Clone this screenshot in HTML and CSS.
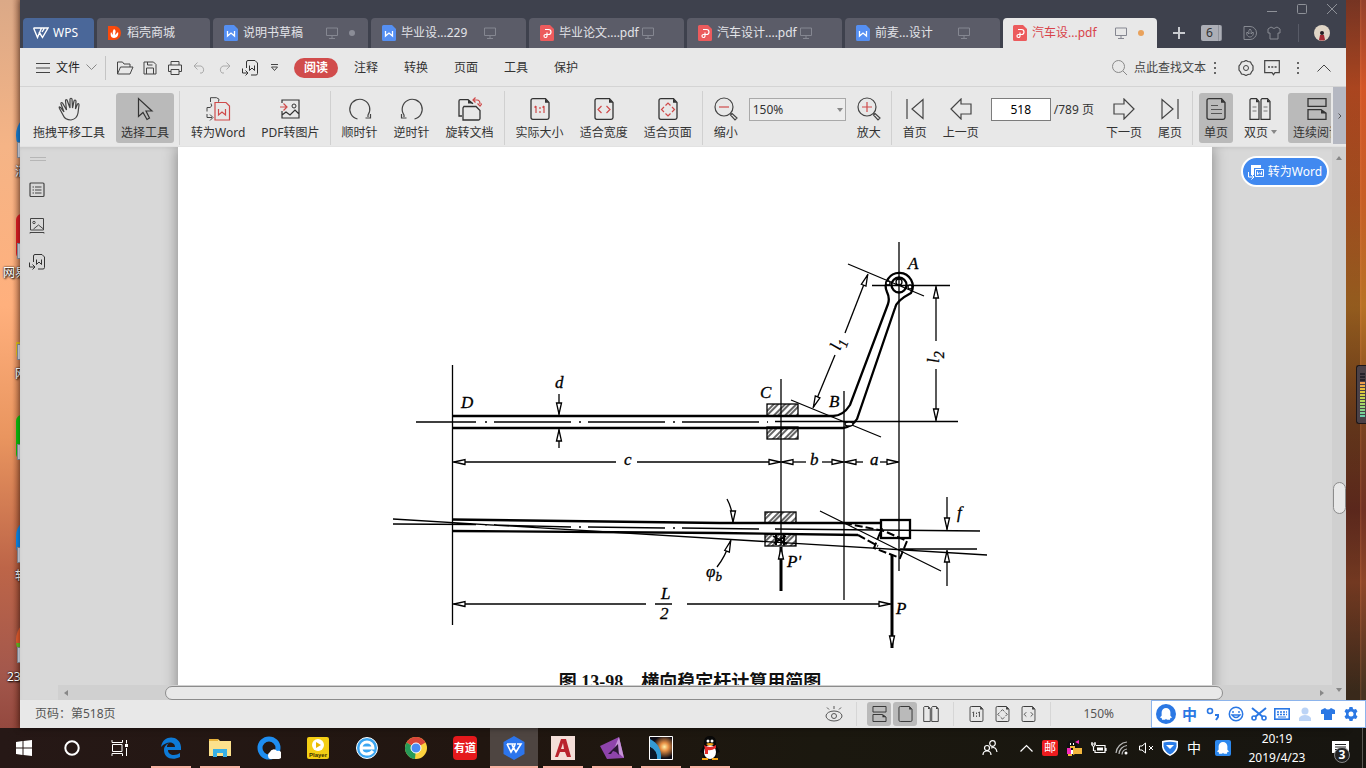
FILE: index.html
```
<!DOCTYPE html>
<html lang="zh-CN">
<head>
    <meta charset="UTF-8">
    <meta name="viewport" content="width=device-width, initial-scale=1.0">
    <title>汽车设计.pdf - WPS</title>
    <link rel="stylesheet" href="styles.css">
</head>
<body>
    <!-- shared icon shapes -->
    <svg class="sprite" width="0" height="0">
        <symbol id="doc-w" viewBox="0 0 14 16"><path d="M1.500 0H10l4 4v10.500a1.500 1.500 0 0 1-1.500 1.500h-11A1.500 1.500 0 0 1 0 14.500v-13A1.500 1.500 0 0 1 1.500 0z" fill="#558ff2"/><path d="M3.500 6v5L7 8l3.500 3V6" fill="none" stroke="#fff" stroke-width="1.300"/></symbol>
        <symbol id="doc-p" viewBox="0 0 14 16"><path d="M1.500 0H10l4 4v10.500a1.500 1.500 0 0 1-1.500 1.500h-11A1.500 1.500 0 0 1 0 14.500v-13A1.500 1.500 0 0 1 1.500 0z" fill="#ec5b5d"/><path d="M5 4.500h3.500a2.500 2.500 0 0 1 0 5H5.500a1.500 1.500 0 1 0 1.500 1.500V7.500" fill="none" stroke="#fff" stroke-width="1.200"/></symbol>
        <symbol id="monitor" viewBox="0 0 12 12"><path d="M.5 1h11v7.500H.5zM6 8.500v3M3 11.500h6" fill="none" stroke="currentColor"/></symbol>
        <symbol id="to-word" viewBox="0 0 16 16"><path d="M4.500 8V2q0-1.500 1.500-1.500h7L15.500 3v10.500q0 1.500-1.500 1.500H9M.5 8.500v4.500h5M3.500 10.500L6 13l-2.500 2.500M7.500 5.500v5l2.500-2.500 2.500 2.500v-5" fill="none" stroke="currentColor"/></symbol>
        <symbol id="page" viewBox="0 0 20 22"><path d="M3 .7h12.500L19 4.500V19.500q0 1.800-1.800 1.800H2.800Q1 21.300 1 19.500V2.500Q1 .7 3 .7z" fill="none" stroke="#333" stroke-width="1.300"/><path d="M15 .7v4h4z" fill="#333"/></symbol>
        <symbol id="continuous" viewBox="0 0 20 22"><path d="M1 .7h18v7.600H1zM1 21.300v-9.600h13l5 3.500v6.100z" fill="none" stroke="#333" stroke-width="1.300"/><path d="M14 11.500v4h5z" fill="#333"/></symbol>
        <symbol id="two-pages" viewBox="0 0 22 22"><path d="M2 .7h5.500L10 3.500v17.800H1V1.700zM13 .7h5.500L21 3.500v17.800h-9V1.700z" fill="none" stroke="#333" stroke-width="1.200"/><path d="M7 .7v3.500h3zM18 .7v3.500h3z" fill="#333"/></symbol>
        <symbol id="zoom-lens" viewBox="0 0 24 24"><circle cx="10" cy="10" r="9" fill="none" stroke="#444" stroke-width="1.200"/><path d="M16.500 16.500l1.500 1M18 16.500l5 4.500-2 2-4.500-5z" fill="none" stroke="#444" stroke-width="1.200"/></symbol>
        <symbol id="ghost" viewBox="0 0 16 16"><path d="M8 1a5 5 0 0 1 5 5v4l2 2-2 .5-.5 2H9l-1-1-1 1H3.500l-.5-2-2-.5 2-2V6a5 5 0 0 1 5-5z" fill="#fff"/></symbol>
    </svg>

    <main class="desktop">
        <div class="wallpaper-left">
            <i class="shortcut blue"></i>
            <span class="shortcut-name n1">消</span>
            <i class="shortcut red"></i>
            <span class="shortcut-name n2">网易</span>
            <i class="shortcut yellow"></i>
            <span class="shortcut-name n3">网</span>
            <i class="shortcut green"></i>
            <i class="shortcut sky"></i>
            <span class="shortcut-name n4">软</span>
            <i class="shortcut multi"></i>
            <span class="shortcut-name n5">23</span>
        </div>

        <div class="window">
            <header class="tab-strip">
                <nav class="tabs">
                    <a href="#" class="tab home"><svg width="16" height="12" viewBox="0 0 16 12"><path d="M.5 1h11L9 5M.5 1l4 9.500L8.500 1M6 5l3.500 5.500L15 1h-3" fill="none" stroke="#fff" stroke-width="1.400"/></svg>WPS</a>
                    <a href="#" class="tab store"><svg width="13" height="14" viewBox="0 0 13 14"><path d="M0 0h6.500a6.500 7 0 0 1 0 14H0z" fill="#fa4a0c"/><path d="M6 3c3 2 1 4 1 6l3-3c1 3-1 6-4 6S2 9 3 6l2 3c0-2-1-3 1-6z" fill="#fff"/></svg>稻壳商城</a>
                    <a href="#" class="tab"><svg width="14" height="16"><use href="#doc-w"/></svg><span class="tab-name">说明书草稿</span><svg width="12" height="12"><use href="#monitor"/></svg><i class="dot"></i></a>
                    <a href="#" class="tab"><svg width="14" height="16"><use href="#doc-w"/></svg><span class="tab-name">毕业设...229</span><svg width="12" height="12"><use href="#monitor"/></svg></a>
                    <a href="#" class="tab"><svg width="14" height="16"><use href="#doc-p"/></svg><span class="tab-name">毕业论文....pdf</span><svg width="12" height="12"><use href="#monitor"/></svg></a>
                    <a href="#" class="tab"><svg width="14" height="16"><use href="#doc-p"/></svg><span class="tab-name">汽车设计....pdf</span><svg width="12" height="12"><use href="#monitor"/></svg></a>
                    <a href="#" class="tab"><svg width="14" height="16"><use href="#doc-w"/></svg><span class="tab-name">前麦...设计</span><svg width="12" height="12"><use href="#monitor"/></svg></a>
                    <a href="#" class="tab active"><svg width="14" height="16"><use href="#doc-p"/></svg><span class="tab-name">汽车设...pdf</span><svg width="12" height="12"><use href="#monitor"/></svg><i class="dot"></i></a>
                </nav>
                <button class="new-tab" aria-label="新建"><svg width="12" height="12" viewBox="0 0 12 12"><path d="M6 0v12M0 6h12" stroke="#c9cbd0" stroke-width="2"/></svg></button>
                <button class="tab-count">6</button>
                <div class="strip-right">
                    <div class="window-buttons">
                        <button aria-label="最小化"><svg width="12" height="12" viewBox="0 0 12 12"><path d="M1 8.500h10" stroke="#8e9198"/></svg></button>
                        <button aria-label="最大化"><svg width="12" height="12" viewBox="0 0 12 12"><rect x="1.500" y="1.500" width="9" height="9" rx="1" fill="none" stroke="#8e9198"/></svg></button>
                        <button aria-label="关闭"><svg width="12" height="12" viewBox="0 0 12 12"><path d="M1 1l10 10M11 1L1 11" stroke="#8e9198"/></svg></button>
                    </div>
                    <div class="account">
                        <svg width="14" height="14" viewBox="0 0 14 14"><path d="M1 .5h6a6.500 6.500 0 0 1 0 13H1zM7 3c2 2 1 3 1 5l2-2c1 3-1 5-3 5S3 9 4 6l2 2c0-2-1-3 1-5z" fill="none" stroke="#878a92"/></svg>
                        <svg width="14" height="14" viewBox="0 0 14 14"><path d="M4 1L1 3v4h2v6h8V7h2V3l-3-2q-3 3-6 0z" fill="none" stroke="#878a92"/></svg>
                        <i class="strip-line"></i>
                        <svg class="avatar" width="16" height="16" viewBox="0 0 16 16"><circle cx="8" cy="8" r="8" fill="#e0d5c6"/><circle cx="8" cy="8" r="2" fill="#241c22"/><path d="M5 15l1-5h4l1 5q-3 1-6 0z" fill="#a52b34"/></svg>
                    </div>
                </div>
            </header>

            <div class="menu-bar">
                <button class="file-menu"><svg width="14" height="10" viewBox="0 0 14 10"><path d="M0 .5h14M0 5h14M0 9.500h14" stroke="#444"/></svg>文件<svg class="chevron" width="11" height="7" viewBox="0 0 11 7"><path d="M.5 .5l5 5 5-5" fill="none" stroke="#888"/></svg></button>
                <div class="quick-tools">
                    <button aria-label="打开"><svg width="18" height="14" viewBox="0 0 18 14"><path d="M1.500 13V1h5l1.500 2h6v3M1.500 13L4.500 6h12.500l-3 7z" fill="none" stroke="#444"/></svg></button>
                    <button aria-label="保存"><svg width="14" height="14" viewBox="0 0 14 14"><path d="M1 1h9.500L13 3.500V13H1zM3.500 13V7h7v6M4.500 1v3h5" fill="none" stroke="#444"/></svg></button>
                    <button aria-label="打印"><svg width="14" height="14" viewBox="0 0 14 14"><path d="M3 4V.5h8V4M3 10.500H.5V4h13v6.500H11M3 8.500h8v5H3z" fill="none" stroke="#444"/></svg></button>
                    <button aria-label="撤销"><svg width="13" height="12" viewBox="0 0 13 12"><path d="M1 4h7a4 4 0 0 1 1 7H7M4.500 .5L1 4l3.500 3.500" fill="none" stroke="#aaa"/></svg></button>
                    <button aria-label="重做"><svg width="13" height="12" viewBox="0 0 13 12"><path d="M12 4H5a4 4 0 0 0-1 7h2M8.500 .5L12 4 8.500 7.500" fill="none" stroke="#aaa"/></svg></button>
                    <button aria-label="转为Word"><svg width="16" height="16"><use href="#to-word"/></svg></button>
                    <button aria-label="更多"><svg width="9" height="8" viewBox="0 0 9 8"><path d="M1 .5h7M1.500 3h6l-3 3.500z" fill="none" stroke="#444"/></svg></button>
                </div>
                <nav class="menus">
                    <a href="#" class="current">阅读</a>
                    <a href="#">注释</a>
                    <a href="#">转换</a>
                    <a href="#">页面</a>
                    <a href="#">工具</a>
                    <a href="#">保护</a>
                </nav>
                <label class="search">
                    <svg width="16" height="16" viewBox="0 0 16 16"><circle cx="6.500" cy="6.500" r="6" fill="none" stroke="#888"/><path d="M11 11l4 4" stroke="#888"/></svg>
                    <input type="text" placeholder="点此查找文本">
                </label>
                <button class="dots" aria-label="查找选项"><svg width="3" height="12" viewBox="0 0 3 12"><path d="M0 1h2M0 6h2M0 11h2" stroke="#666" stroke-width="2"/></svg></button>
                <div class="menu-right">
                    <button aria-label="设置"><svg width="16" height="16" viewBox="0 0 16 16"><path d="M6 1.500L8 .5l2 1 2.500.5 1 2 1.500 2v4l-1.500 2-1 2-2.500.5-2 1-2-1-2.500-.5-1-2L1 10V6l1.500-2 1-2z" fill="none" stroke="#444" stroke-width="1.200"/><circle cx="8" cy="8" r="2.500" fill="none" stroke="#444"/></svg></button>
                    <button aria-label="反馈"><svg width="16" height="16" viewBox="0 0 16 16"><path d="M1 .7h14.300v12H11l-1.500 2L8 12.700H.7V.7z" fill="none" stroke="#444" stroke-width="1.200"/><path d="M4 7h2M7.300 7h2M10.600 7h2" stroke="#444" stroke-width="1.500"/></svg></button>
                    <button aria-label="更多选项"><svg width="3" height="12" viewBox="0 0 3 12"><path d="M0 1h2M0 6h2M0 11h2" stroke="#666" stroke-width="2"/></svg></button>
                    <button aria-label="收起功能区"><svg width="14" height="8" viewBox="0 0 14 8"><path d="M.5 7.500L7 1l6.500 6.500" fill="none" stroke="#444"/></svg></button>
                </div>
            </div>

            <div class="ribbon">
                <div class="ribbon-tools">
                    <button class="tool"><svg width="24" height="24" viewBox="0 0 24 24"><path d="M7 15L3.500 10.500Q1.500 9 2.500 11.500L6 18q2 5 8 5 6-1 7-7l1-8q0-2-1.500-1l-2 5 .5-8q-1-2-2 0l-1.500 7-.5-9q-1-1.500-2 0v9L10 3Q8.500 2 8.500 4l1 9-4-7q-2-1-1.500 1l3 8z" fill="none" stroke="#444" stroke-width="1.200"/></svg>拖拽平移工具</button>
                    <button class="tool pressed"><svg width="24" height="24" viewBox="0 0 24 24"><path d="M5.500 1.500v18l4.500-4 4 7 2.500-1.500-3.500-7h6z" fill="none" stroke="#333" stroke-width="1.200"/></svg>选择工具</button>
                    <i class="split"></i>
                    <button class="tool"><svg width="26" height="24" viewBox="0 0 26 24"><path d="M5.500 5V.7h6q4 1 2 4M2 14.500v-4h3q3-1 1-4M2 17v3.500h5M5 17.500l3 3-3 3" fill="none" stroke="#444"/><path d="M10 5.500h11l3.500 3.500v14H10zM13.500 12v6l3.500-3 3.500 3v-6" fill="none" stroke="#cf4a4a" stroke-width="1.200"/></svg>转为Word</button>
                    <button class="tool"><svg width="22" height="22" viewBox="0 0 22 22"><path d="M3 5V2h17v18H3v-7M3 17l4-3 4 3 5-5 4 4" fill="none" stroke="#333" stroke-width="1.200"/><circle cx="15" cy="8" r="2" fill="none" stroke="#333"/><path d="M1 9h6M4.500 5.500L8 9l-3.500 3.500" fill="none" stroke="#cf4a4a" stroke-width="1.200"/></svg>PDF转图片</button>
                    <i class="split"></i>
                    <button class="tool"><svg width="24" height="24" viewBox="0 0 24 24"><path d="M9.500 22A10 10 0 1 1 20 18v2M22.500 17v4h-5" fill="none" stroke="#444" stroke-width="1.200"/></svg>顺时针</button>
                    <button class="tool"><svg width="24" height="24" viewBox="0 0 24 24"><path d="M14.500 22A10 10 0 1 0 4 18v2M1.500 17v4h5" fill="none" stroke="#444" stroke-width="1.200"/></svg>逆时针</button>
                    <button class="tool"><svg width="24" height="24" viewBox="0 0 24 24"><path d="M4 19H1V4q0-1.300 1.300-1.300H10l5 4M6 9.500h12l4 4v8q0 1.500-1.500 1.500H5V11z" fill="none" stroke="#333" stroke-width="1.300"/><path d="M10 2.500l5 4h-5z" fill="#333"/><path d="M17.500 .5L15 3l2.500 2.500M15 3h4q3 0 3 4M19.500 6.500L22 9l2-2.500" fill="none" stroke="#cf4a4a" stroke-width="1.200"/></svg>旋转文档</button>
                    <i class="split"></i>
                    <button class="tool"><svg width="20" height="22"><use href="#page"/><path d="M6 8v7M14 8v7M4.500 9.500L6 8M12.500 9.500L14 8M10 9v2M10 13v2" stroke="#cf4a4a" stroke-width="1.200"/></svg>实际大小</button>
                    <button class="tool"><svg width="20" height="22"><use href="#page"/><path d="M7.500 8L4 11.500 7.500 15M12.500 8l3.500 3.500-3.500 3.500" fill="none" stroke="#cf4a4a" stroke-width="1.200"/></svg>适合宽度</button>
                    <button class="tool"><svg width="20" height="22"><use href="#page"/><path d="M7.500 7.500L10 5l2.500 2.500M7.500 15.500L10 18l2.500-2.500M6 9l-2.500 2.500L6 14M14 9l2.500 2.500L14 14" fill="none" stroke="#cf4a4a" stroke-width="1.200"/></svg>适合页面</button>
                    <i class="split"></i>
                    <button class="tool"><svg width="24" height="24"><use href="#zoom-lens"/><path d="M5 10h10" stroke="#cf4a4a" stroke-width="1.200"/></svg>缩小</button>
                    <div class="zoom-pick"><select aria-label="缩放比例"><option>150%</option></select></div>
                    <button class="tool"><svg width="24" height="24"><use href="#zoom-lens"/><path d="M5 10h10M10 5v10" stroke="#cf4a4a" stroke-width="1.200"/></svg>放大</button>
                    <i class="split"></i>
                    <button class="tool"><svg width="20" height="22" viewBox="0 0 20 22"><path d="M2 1v20M18 1.500v19L7 11z" fill="none" stroke="#444" stroke-width="1.200"/></svg>首页</button>
                    <button class="tool"><svg width="22" height="22" viewBox="0 0 22 22"><path d="M1 11L11 1v5h10v10H11v5z" fill="none" stroke="#444" stroke-width="1.200"/></svg>上一页</button>
                    <div class="page-pick"><input type="text" aria-label="页码" value="518"><span>/789 页</span></div>
                    <button class="tool"><svg width="22" height="22" viewBox="0 0 22 22"><path d="M21 11L11 1v5H1v10h10v5z" fill="none" stroke="#444" stroke-width="1.200"/></svg>下一页</button>
                    <button class="tool"><svg width="20" height="22" viewBox="0 0 20 22"><path d="M18 1v20M2 1.500v19L13 11z" fill="none" stroke="#444" stroke-width="1.200"/></svg>尾页</button>
                    <i class="split"></i>
                    <button class="tool pressed"><svg width="20" height="22"><use href="#page"/><path d="M5 7.500h7M5 11.500h11M5 15.500h11" stroke="#555"/></svg>单页</button>
                    <button class="tool"><svg width="22" height="22"><use href="#two-pages"/><path d="M3.500 9h4M3.500 13h4M14.500 9h4M14.500 13h4" stroke="#777"/></svg><span>双页<i class="down"></i></span></button>
                    <button class="tool pressed"><svg width="20" height="22"><use href="#continuous"/></svg>连续阅读</button>
                </div>
                <button class="ribbon-more" aria-label="更多工具"><svg width="4" height="6" viewBox="0 0 4 6"><path d="M.5 .5L3 3 .5 5.500" fill="none" stroke="#555"/></svg></button>
            </div>

            <div class="workspace">
                <aside class="side-bar">
                    <i class="grip"></i>
                    <button aria-label="目录"><svg width="16" height="16" viewBox="0 0 16 16"><rect x="1" y="1" width="14" height="13.500" rx="1" fill="none" stroke="#444" stroke-width="1.200"/><path d="M3.500 5h1.500M6 5h6.500M3.500 8h1.500M6 8h6.500M3.500 11h1.500M6 11h6.500" stroke="#444"/></svg></button>
                    <button aria-label="缩略图"><svg width="16" height="16" viewBox="0 0 16 16"><path d="M1.500 .5h13v11.500h-13zM1 15.500v-1h14v1M4.500 11l5-4 5 4" fill="none" stroke="#444"/><circle cx="5" cy="4.500" r="1.200" fill="none" stroke="#444"/></svg></button>
                    <button aria-label="转为Word"><svg width="16" height="16"><use href="#to-word"/></svg></button>
                </aside>
                <section class="viewer">
                    <div class="pages">
                        <figure class="sheet">
                            <svg viewBox="178 147 1034 523" class="drawing">
                                <defs>
                                    <marker id="arrow" markerUnits="userSpaceOnUse" markerWidth="16" markerHeight="8" refX="13" refY="4" orient="auto-start-reverse"><path d="M1 1.500L12 4 1 6.500z" fill="#fff" stroke="#000" stroke-width="1.300"/></marker>
                                    <pattern id="hatch" width="8" height="8" patternUnits="userSpaceOnUse" patternTransform="rotate(45)"><path d="M1 0v8M4 0v8" stroke="#000" stroke-width="1.200"/></pattern>
                                </defs>
                                <g class="thin">
                                    <path d="M452.500 365V625M781 379v166M844 391v209M899 242v329"/>
                                    <path d="M416 422h60M494 422h77M588 422h77M682 422h77M775 421.500h183M485 422h2M579 422h2M673 422h2M767 422h1"/>
                                    <path d="M872 285.500h78M848 264l76 32M791 400l90 37M820 511l121 60"/>
                                    <path d="M393 519l594 36M393 524l83 .5M494 525l77 2M588 527l77 1M682 528l77 1M775 529l205 2M485 525h2M579 527h2M673 528h2M900 549h77"/>
                                </g>
                                <g class="thick">
                                    <path d="M452 416H833Q843 416 850 405L888 304Q890 298 887 292A13.500 13.500 0 1 1 911 293Q896 301 895 308L857 419Q852 427 843 428H452"/>
                                    <circle cx="899" cy="285" r="7.500"/>
                                    <path d="M452 519.500L720 523H880M452 531L720 533 858 535"/>
                                    <rect x="881" y="520" width="29" height="18"/>
                                </g>
                                <g class="thin">
                                    <circle cx="888" cy="283" r="2" fill="#fff"/><circle cx="910" cy="287" r="2" fill="#fff"/><circle cx="899" cy="282" r="3"/>
                                    <path d="M844 523l40 8 23 10-7 17-26-10 8-20M858 535l20 11" stroke-width="2" stroke-dasharray="8 3"/>
                                    <ellipse cx="849" cy="424" rx="4" ry="2" fill="#fff"/>
                                    <rect x="767" y="404" width="31" height="12" class="hatched"/><rect x="767" y="427" width="31" height="12" class="hatched"/>
                                    <rect x="765" y="512" width="31" height="11" class="hatched"/><rect x="765" y="534" width="31" height="12" class="hatched"/>
                                    <path d="M773 536l14 8M774 543l12-7M776 535v10M784 535v10" stroke-width="2"/>
                                </g>
                                <g class="dims">
                                    <path d="M559 394v21"/><path d="M559 448v-19"/>
                                    <path d="M616 462H453"/><path d="M637 462h144"/>
                                    <path d="M806 462h-25"/><path d="M822 462h22"/><path d="M863 462h-19"/><path d="M880 462h19"/>
                                    <path d="M845 333l23-59"/><path d="M835 355l-22 53"/>
                                    <path d="M936 341v-55"/><path d="M936 369v52"/>
                                    <path d="M646 604H453"/><path d="M687 604h204"/>
                                    <path d="M727 499q6 11 6 24"/><path d="M717 567q8-10 14-27"/>
                                    <path d="M947 497v33"/><path d="M947 586v-36"/>
                                    <path d="M781 591v-44" stroke-width="3"/><path d="M892 555v93" stroke-width="3"/>
                                </g>
                                <path d="M655 604h17" stroke="#000" stroke-width="1.500"/>
                                <g class="letters">
                                    <text x="461" y="408">D</text><text x="555" y="388">d</text><text x="760" y="398">C</text><text x="829" y="407">B</text><text x="908" y="269">A</text>
                                    <text x="624" y="465">c</text><text x="810" y="465">b</text><text x="870" y="465">a</text>
                                    <text x="787" y="567">P'</text><text x="896" y="614">P</text><text x="957" y="518">f</text>
                                    <text x="661" y="599">L</text><text x="660" y="619">2</text>
                                    <text x="706" y="577">φ<tspan dy="4" font-size="13">b</tspan></text>
                                    <text transform="translate(840 351) rotate(-70)">l<tspan dy="5" font-size="14">1</tspan></text>
                                    <text transform="translate(939 363) rotate(-90)">l<tspan dy="5" font-size="14">2</tspan></text>
                                </g>
                            </svg>
                            <figcaption><span>图 13-98</span><span>横向稳定杆计算用简图</span></figcaption>
                        </figure>
                        <button class="convert"><svg width="16" height="16" viewBox="0 0 16 16"><path d="M3 1h10v3H6v7H3z" fill="#fff"/><path d="M7.500 5.500h8v7h-8zM9.500 7.500v3l2-1.500 2 1.500v-3M.5 8v5h5M3.500 10.500L6 13l-2.500 2.500" fill="none" stroke="#fff"/></svg>转为Word</button>
                    </div>
                    <div class="h-scroll"><i class="left"></i><div class="h-thumb"></div><i class="right"></i></div>
                </section>
                <div class="v-scroll"><i class="up"></i><div class="v-thumb"></div><i class="down"></i></div>
            </div>

            <footer class="status-bar">
                <span class="page-no">页码：第518页</span>
                <button aria-label="护眼模式"><svg width="18" height="18" viewBox="0 0 18 18"><ellipse cx="9" cy="11" rx="8" ry="5" fill="none" stroke="#555"/><circle cx="9" cy="11" r="2.500" fill="none" stroke="#555"/><path d="M9 1v3M2 2.500l2 2M16 2.500l-2 2" stroke="#555"/></svg></button>
                <i class="status-split"></i>
                <button class="on" aria-label="连续"><svg width="15" height="16"><use href="#continuous"/></svg></button>
                <button class="on" aria-label="单页"><svg width="15" height="16"><use href="#page"/></svg></button>
                <button aria-label="双页"><svg width="16" height="16"><use href="#two-pages"/></svg></button>
                <i class="status-split"></i>
                <button aria-label="实际大小"><svg width="15" height="16" viewBox="0 0 20 22"><use href="#page"/><path d="M6 8v7M14 8v7M4.500 9.500L6 8M12.500 9.500L14 8M10 9v2M10 13v2" stroke="#444" stroke-width="1.300"/></svg></button>
                <button aria-label="适合页面"><svg width="15" height="16" viewBox="0 0 20 22"><use href="#page"/><path d="M7.500 7.500L10 5l2.500 2.500M7.500 15.500L10 18l2.500-2.500M6 9l-2.500 2.500L6 14M14 9l2.500 2.500L14 14" fill="none" stroke="#444" stroke-width="1.200"/></svg></button>
                <button aria-label="适合宽度"><svg width="15" height="16" viewBox="0 0 20 22"><use href="#page"/><path d="M7 8.500L4 11.500 7 14.500M13 8.500l3 3-3 3" fill="none" stroke="#444" stroke-width="1.200"/></svg></button>
                <i class="status-split"></i>
                <span class="zoom-value">150%</span>
            </footer>
        </div>

        <div class="wallpaper-right"><i class="meter"></i></div>

        <div class="ime-bar">
            <button class="ime-logo" aria-label="输入法"><svg width="14" height="14"><use href="#ghost"/></svg></button>
            <button class="ime-lang">中</button>
            <button aria-label="标点"><svg width="14" height="14" viewBox="0 0 14 14"><circle cx="4" cy="4" r="2.500" fill="none" stroke="#2b78e4" stroke-width="1.600"/><path d="M9 8h3v2l-2 3" fill="none" stroke="#2b78e4" stroke-width="2"/></svg></button>
            <button aria-label="表情"><svg width="16" height="16" viewBox="0 0 16 16"><circle cx="8" cy="8" r="6.700" fill="none" stroke="#2b78e4" stroke-width="1.500"/><path d="M5 5v2M11 5v2M4 9q4 5 8 0z" fill="none" stroke="#2b78e4" stroke-width="1.400"/></svg></button>
            <button aria-label="截图"><svg width="16" height="14" viewBox="0 0 16 14"><path d="M1 1l11 9M15 1L4 10" stroke="#2b78e4" stroke-width="2"/><circle cx="3" cy="11" r="2" fill="none" stroke="#2b78e4" stroke-width="1.600"/><circle cx="13" cy="11" r="2" fill="none" stroke="#2b78e4" stroke-width="1.600"/></svg></button>
            <button aria-label="键盘"><svg width="16" height="12" viewBox="0 0 16 12"><rect x=".8" y=".8" width="14.400" height="10.400" fill="none" stroke="#2b78e4" stroke-width="1.600"/><path d="M3 4h10M3 6.500h10" stroke="#2b78e4" stroke-width="1.500" stroke-dasharray="2 1"/><path d="M4 9h8" stroke="#2b78e4"/></svg></button>
            <button aria-label="用户"><svg width="14" height="14" viewBox="0 0 14 14"><circle cx="7" cy="4" r="3.500" fill="#bcd4f6"/><path d="M1 14V11q2-3 6-3t6 3v3z" fill="#bcd4f6"/></svg></button>
            <button aria-label="皮肤"><svg width="14" height="14" viewBox="0 0 14 14"><path d="M4 1L0 3v4h3v6h8V7h3V3l-4-2q-3 3-6 0z" fill="#2b78e4"/></svg></button>
            <button aria-label="设置"><svg width="16" height="16" viewBox="0 0 16 16"><path d="M6.500 1h3l.5 2 1 .5 2-.5 1.500 2.500L13 7v2l1.500 1.500L13 13l-2-.5-1 .5-.5 2h-3L6 13l-1-.5-2 .5-1.500-2.500L3 9V7L1.500 5.500 3 3l2 .5L6 3z" fill="#2b78e4"/><circle cx="8" cy="8" r="2.500" fill="#fff"/></svg></button>
        </div>
    </main>

    <footer class="taskbar">
        <div class="system">
            <button aria-label="开始"><svg width="16" height="16" viewBox="0 0 16 16"><path d="M0 2l6.500-1v6.500H0zM7.500 .9L16 0v7.500H7.500zM0 8.500h6.500V15L0 14zM7.500 8.500H16V16l-8.500-1z" fill="#fff"/></svg></button>
            <button aria-label="Cortana"><svg width="16" height="16" viewBox="0 0 16 16"><circle cx="8" cy="8" r="6.700" fill="none" stroke="#fff" stroke-width="2"/></svg></button>
            <button aria-label="任务视图"><svg width="18" height="16" viewBox="0 0 18 16"><path d="M1 0v2.500h10.500V0M1 16v-2.500h10.500V16M1.500 4.500h9.500v7H1.500zM15.500 0v3.500M15.500 8v8" fill="none" stroke="#fff"/><path d="M14 4h3v3h-3z" fill="#fff"/></svg></button>
        </div>
        <div class="apps">
            <button class="open" aria-label="Edge"><svg width="22" height="22" viewBox="0 0 22 22"><path d="M1 10C3-3 20-2 21 10v3H8c0 6 8 6 12 3v4c-8 4-16 1-16-7 0-4 3-6 5-7-2 2-2 3-2 4h8c0-6-9-6-14 0z" fill="#0e7bd7"/></svg></button>
            <button class="open" aria-label="资源管理器"><svg width="22" height="20" viewBox="0 0 22 20"><path d="M0 1h9l2 2h11v15H0z" fill="#fce18c"/><path d="M0 1h9v2H0z" fill="#e8b33c"/><path d="M4 19v-8h14v8h-4v-4H8v4z" fill="#38b0e6"/></svg></button>
            <button aria-label="QQ浏览器"><svg width="24" height="24" viewBox="0 0 24 24"><circle cx="12" cy="12" r="9" fill="none" stroke="#1e8df0" stroke-width="5"/><path d="M13 23a4 4 0 0 1 0-7 4 4 0 0 1 7-1 4 4 0 0 1 2 8z" fill="#fff"/></svg></button>
            <button aria-label="Player"><span class="player"><svg width="12" height="12" viewBox="0 0 12 12"><circle cx="6" cy="6" r="6" fill="#fff"/><path d="M4 3l5 3-5 3z" fill="#eab800"/></svg>Player</span></button>
            <button aria-label="浏览器"><svg width="22" height="22" viewBox="0 0 22 22"><circle cx="11" cy="11" r="10.500" fill="#3ba6f2" stroke="#fff"/><path d="M5 11h12c0-8-12-8-12 0s9 7 12 3" fill="none" stroke="#fff" stroke-width="3"/></svg></button>
            <button aria-label="Chrome"><svg width="22" height="22" viewBox="0 0 22 22"><circle cx="11" cy="11" r="11" fill="#fdd23e"/><path d="M11 11L1.500 5.500A11 11 0 0 1 20.500 5.500z" fill="#d9463a"/><path d="M11 11L1.500 5.500A11 11 0 0 0 10 22z" fill="#279a59"/><circle cx="11" cy="11" r="5" fill="#4a8cf4" stroke="#fff"/></svg></button>
            <button aria-label="有道"><span class="youdao">有道</span></button>
            <button class="open wide" aria-label="WPS"><svg width="22" height="24" viewBox="0 0 22 24"><path d="M11 0l10.500 6v12L11 24 .5 18V6z" fill="#2c75ec"/><path d="M4 8h9M4 8l4 8 4-7M9 9l4 7 5-8h-4" fill="none" stroke="#fff" stroke-width="1.600"/></svg></button>
            <button class="open" aria-label="AutoCAD"><svg width="24" height="24" viewBox="0 0 24 24"><path d="M0 0h24v24H0z" fill="#f4ded8"/><path d="M4 21L10 3h5l5 18h-4l-2-5H9l-2 5zM10 13h3l-1-6z" fill="#b9232d"/></svg></button>
            <button class="open" aria-label="CAD"><svg width="24" height="24" viewBox="0 0 24 24"><path d="M0 10L19 1l5 21-17 1z" fill="#8e44ab"/><path d="M19 1l5 21-10-9z" fill="#c794d8"/><path d="M8 18l10-10 1 11-3-3-3-1-2 3z" fill="#2a1634"/></svg></button>
            <button class="open" aria-label="图像"><svg width="24" height="24" viewBox="0 0 24 24"><defs><radialGradient id="flare" cx=".65" cy=".45" r=".5"><stop offset="0" stop-color="#fff1aa"/><stop offset=".35" stop-color="#e89045"/><stop offset="1" stop-color="#0e0c16"/></radialGradient></defs><path d="M.5 .5h23v23H.5z" fill="url(#flare)" stroke="#fff"/><path d="M1 3q12 6 11 20H8Q8 14 1 11z" fill="#349ad4"/><path d="M1 11q7 3 7 12H1z" fill="#0b1626"/></svg></button>
            <button class="open" aria-label="QQ"><svg width="20" height="24" viewBox="0 0 20 24"><path d="M10 0C3 0 4 7 4 9L0 16l3 1 1 5h12l1-5 3-1-4-7c0-2 1-9-6-9z" fill="#080808"/><ellipse cx="10" cy="16" rx="6" ry="7" fill="#fff"/><path d="M4 9q6 4 12 0v3q-5 3-8 2v4H5v-5z" fill="#e42a2a"/><circle cx="8" cy="5" r="1.500" fill="#fff"/><circle cx="12" cy="5" r="1.500" fill="#fff"/><path d="M6 8q4-2 8 0-4 3-8 0zM2 22h6v2H2zM12 22h6v2h-6z" fill="#f5a313"/></svg></button>
        </div>
        <div class="tray">
            <button class="people" aria-label="人脉"><svg width="16" height="16" viewBox="0 0 16 16"><circle cx="10.500" cy="3.500" r="2.800" fill="none" stroke="#fff" stroke-width="1.200"/><circle cx="5" cy="8" r="2.500" fill="none" stroke="#fff" stroke-width="1.200"/><path d="M1 15q0-4 4-4t4 4M9 8q5-2 6 4" fill="none" stroke="#fff" stroke-width="1.200"/></svg></button>
            <button aria-label="显示隐藏的图标"><svg width="13" height="8" viewBox="0 0 13 8"><path d="M.5 7.500l6-6 6 6" fill="none" stroke="#fff" stroke-width="1.200"/></svg></button>
            <button aria-label="邮箱"><span class="mail">邮</span></button>
            <button aria-label="QQ消息"><svg width="16" height="16" viewBox="0 0 16 16"><ellipse cx="6" cy="6" rx="5" ry="6" fill="#111"/><path d="M1 8h4v6H1zM9 2l4-2v4z" fill="#f629bd"/><path d="M4 3h1v2H4zM7 3h1v2H7zM5 10h3v4H5z" fill="#fff"/><path d="M7 8h9v6H9l-2 1zM4 6h5v2H4zM2 14h4v2H2z" fill="#f3b63d"/></svg></button>
            <button aria-label="电池"><svg width="17" height="13" viewBox="0 0 17 13"><path d="M6 3.500h9v7H5V8M16 6v3M1 2h5M2 0v3q1.500 3 3 0V0M3.500 4v5" fill="none" stroke="#fff" stroke-width="1.200"/><path d="M7 5.500h6v3H7z" fill="#fff"/></svg></button>
            <button aria-label="网络"><svg width="14" height="14" viewBox="0 0 14 14"><path d="M1 12A12 12 0 0 1 12 1M4 13A9 9 0 0 1 12 4.500M7 13.500A6 6 0 0 1 12 8" fill="none" stroke="#bbb" stroke-width="1.200"/><circle cx="11" cy="12" r="1.500" fill="#fff"/></svg></button>
            <button aria-label="音量"><svg width="15" height="12" viewBox="0 0 15 12"><path d="M.5 4H3l3.500-3v10L3 8H.5zM10 4l4 4M14 4l-4 4" fill="none" stroke="#fff"/></svg></button>
            <button aria-label="管家"><svg width="16" height="16" viewBox="0 0 16 16"><path d="M0 1q8-2 16 0v6q-1 6-8 9-7-3-8-9z" fill="#fff"/><path d="M1.500 2.500q6.500-1.500 13 0v4q-1 5-6.500 8-5.500-3-6.500-8z" fill="#2a7ce8"/><path d="M4 5h8L8 9z" fill="#fff"/></svg></button>
            <button class="lang">中</button>
            <button aria-label="拼音"><span class="pinyin"><svg width="14" height="14"><use href="#ghost"/></svg></span></button>
            <button class="clock"><span>20:19</span><span>2019/4/23</span></button>
            <button class="notice" aria-label="通知"><svg width="17" height="15" viewBox="0 0 17 15"><path d="M0 0h17v12H7l-3 3v-3H0z" fill="#fff"/><path d="M3 3.500h11M3 6h11M3 8.500h7" stroke="#222"/></svg><b>3</b></button>
        </div>
    </footer>
</body>
</html>
```
FILE: styles.css
```
* {
    margin: 0;
    padding: 0;
    box-sizing: border-box;
}
body {
    height: 100vh;
    display: flex;
    flex-direction: column;
    overflow: hidden;
    font-family: "Noto Sans", "Noto Sans CJK SC", sans-serif;
    font-size: 12px;
    line-height: 16px;
    color: #333;
}
button, input, select {
    font: inherit;
    color: inherit;
    border: none;
    background: none;
}
button {
    display: flex;
    align-items: center;
    justify-content: center;
}
a {
    color: inherit;
    text-decoration: none;
}
svg {
    flex: none;
}
.sprite {
    position: absolute;
}

/* desktop */
.desktop {
    flex: 1;
    min-height: 0;
    display: flex;
    position: relative;
}
.wallpaper-left, .wallpaper-right {
    width: 20px;
    position: relative;
    overflow: hidden;
}
.wallpaper-left {
    background: linear-gradient(90deg, transparent 60%, rgba(80, 20, 0, 0.3)), linear-gradient(#dba987, #f5b486 20%, #ffb07d 42%, #e9955f 60%, #bd6548 78%, #a4584c 92%, #94493f);
}
.wallpaper-right {
    background: linear-gradient(90deg, rgba(0, 0, 0, 0.2) 14px, rgba(255, 150, 90, 0.2) 14px, transparent 16px), linear-gradient(#93412b, #d45627 12%, #c65f26 28%, #b87225 42%, #7a4320 58%, #713123 70%, #8f4729 80%, #473321 95%);
}
.shortcut {
    position: absolute;
    left: 16px;
    width: 44px;
    height: 45px;
    border-radius: 6px;
}
.shortcut::after {
    content: "";
    position: absolute;
    left: 1px;
    bottom: 0;
    width: 14px;
    height: 14px;
    background: #d4dbe9;
    border: 1px solid #8b8f9a;
}
.blue { top: 113px; background: #1979ca; border-radius: 22px; }
.red { top: 214px; background: #d61c22; }
.yellow { top: 315px; background: linear-gradient(transparent 60%, #d7b61a 60%); }
.green { top: 415px; background: #0cbb0c; }
.sky { top: 518px; background: #0d86e8; border-radius: 18px; }
.multi { top: 618px; background: linear-gradient(#e05a2c 55%, #64bb22 55%); border-radius: 22px; }
.shortcut-name {
    position: absolute;
    left: 15px;
    color: #fff;
    white-space: nowrap;
    text-shadow: 1px 1px 2px #000, 0 0 2px #000;
}
.n1 { top: 164px; }
.n2 { top: 265px; left: 3px; }
.n3 { top: 366px; }
.n4 { top: 568px; }
.n5 { top: 669px; left: 7px; }
.meter {
    position: absolute;
    right: 0;
    top: 365px;
    width: 10px;
    height: 59px;
    border: 1px solid #1d1719;
    border-right: none;
    border-radius: 3px 0 0 3px;
    background: #4b4147;
}
.meter::after {
    content: "";
    position: absolute;
    left: 3px;
    top: 7px;
    width: 5px;
    height: 45px;
    background: repeating-linear-gradient(transparent 0 2px, #4b4147 2px 3px), linear-gradient(#26222a 20%, #ef9b50 20%, #e6c63a 40%, #b3d95a 62%, #62ccb0);
}
.window {
    flex: 1;
    min-width: 0;
    display: flex;
    flex-direction: column;
    background: #e8e8e8;
    box-shadow: 0 0 6px rgba(0, 0, 0, 0.5);
    position: relative;
}

/* tab strip */
.tab-strip {
    height: 48px;
    display: flex;
    align-items: flex-end;
    padding-left: 3px;
    background: #3e414d;
}
.tabs {
    display: flex;
    gap: 3px;
}
.tab {
    width: 155px;
    height: 30px;
    display: flex;
    align-items: center;
    padding-left: 11px;
    border-radius: 4px 4px 0 0;
    background: #5b5c68;
    color: #e3e4e8;
    white-space: nowrap;
}
.tab.home {
    width: 71px;
    padding-left: 10px;
    gap: 4px;
    background: #4a6799;
    color: #fff;
}
.tab.store {
    width: 113px;
    gap: 6px;
}
.tab-name {
    width: 83px;
    margin-left: 5px;
}
.tab use {
    color: #858791;
}
.tab.active {
    width: 154px;
    padding-left: 10px;
    background: #e8e8e8;
    color: #d8434a;
}
.dot {
    width: 6px;
    height: 6px;
    margin-left: 11px;
    border-radius: 50%;
    background: #8b8d97;
}
.active .dot {
    background: #e9a25c;
}
.new-tab {
    width: 44px;
    height: 30px;
}
.tab-count {
    width: 21px;
    height: 16px;
    margin-bottom: 7px;
    border-right: 4px double #8f929b;
    border-radius: 2px;
    background: #acaeb6;
    color: #333;
}
.strip-right {
    flex: 1;
    height: 48px;
    display: flex;
    flex-direction: column;
    justify-content: space-between;
    align-items: flex-end;
}
.window-buttons {
    display: flex;
    gap: 18px;
    padding: 3px 8px 0 0;
}
.account {
    display: flex;
    align-items: center;
    gap: 10px;
    height: 30px;
    padding-right: 16px;
}
.strip-line {
    width: 1px;
    height: 18px;
    margin: 0 5px 0 7px;
    background: #585b67;
}

/* menu bar */
.menu-bar {
    height: 39px;
    display: flex;
    align-items: center;
    padding-top: 1px;
    border-bottom: 1px solid #d4d4d4;
}
.file-menu {
    height: 24px;
    padding: 0 8px 0 16px;
    gap: 6px;
    border-right: 1px solid #c4c4c4;
    color: #222;
}
.quick-tools {
    display: flex;
    padding: 0 7px 0 6px;
}
.quick-tools button {
    width: 25px;
    height: 24px;
}
.menus {
    display: flex;
    gap: 6px;
}
.menus a {
    width: 44px;
    line-height: 20px;
    text-align: center;
}
.menus .current {
    border-radius: 10px;
    background: #d14c4c;
    color: #fff;
    font-weight: bold;
}
.search {
    display: flex;
    align-items: center;
    gap: 6px;
    margin-left: auto;
}
.search input {
    width: 76px;
}
.search input::placeholder {
    color: #444;
    opacity: 1;
}
.dots {
    width: 10px;
    height: 24px;
}
.menu-right {
    display: flex;
    padding: 0 9px 0 13px;
}
.menu-right button {
    width: 26px;
    height: 24px;
}

/* ribbon */
.ribbon {
    height: 60px;
    display: flex;
    border-bottom: 1px solid #e2e2e2;
}
.ribbon-tools {
    flex: 1;
    min-width: 0;
    display: flex;
    align-items: flex-start;
    gap: 6px;
    margin-right: 2px;
    padding: 6px 0 0 8px;
    overflow: hidden;
}
.tool {
    flex: none;
    height: 50px;
    flex-direction: column;
    justify-content: flex-end;
    padding: 0 5px 2px;
    border-radius: 3px;
    white-space: nowrap;
}
.tool svg {
    margin: auto 0;
}
.tool.pressed {
    background: #bababa;
}
.split {
    flex: none;
    width: 1px;
    height: 54px;
    margin: -2px 0 0 -1px;
    background: #d0d0d0;
}
.down, .up, .left, .right {
    display: inline-block;
    border: 3px solid transparent;
}
.down {
    border-top: 4px solid #888;
    border-bottom: none;
}
.up {
    border-bottom: 4px solid #888;
    border-top: none;
}
.left {
    border-right: 4px solid #888;
    border-left: none;
}
.right {
    border-left: 4px solid #888;
    border-right: none;
}
.tool .down {
    margin: 0 0 3px 3px;
}
.zoom-pick {
    position: relative;
    margin-top: 5px;
}
.zoom-pick::after {
    content: "";
    position: absolute;
    right: 3px;
    top: 10px;
    border: 3px solid transparent;
    border-top: 4px solid #888;
    border-bottom: none;
}
.zoom-pick select {
    width: 97px;
    height: 23px;
    padding-left: 3px;
    border: 1px solid #a9a9a9;
    appearance: none;
    background: #ededed;
}
.page-pick {
    display: flex;
    align-items: center;
    gap: 3px;
    margin: 5px 1px 0;
    white-space: nowrap;
}
.page-pick input {
    width: 60px;
    height: 23px;
    border: 1px solid #7c7c7c;
    background: #fff;
    color: #000;
    text-align: center;
}
.ribbon-more {
    width: 13px;
    height: 57px;
    background: #b5b8c2;
}

/* workspace */
.workspace {
    flex: 1;
    min-height: 0;
    display: flex;
    background: #d8d8d8;
    box-shadow: inset 0 2px 3px #ccc;
}
.side-bar {
    width: 38px;
    padding: 10px 0 0 9px;
}
.grip {
    display: block;
    width: 16px;
    height: 4px;
    margin: 0 0 21px 1px;
    border: solid #b6b6b6;
    border-width: 1px 0;
}
.side-bar button {
    margin-bottom: 20px;
}
.viewer {
    flex: 1;
    min-width: 0;
    display: flex;
    flex-direction: column;
}
.pages {
    flex: 1;
    min-height: 0;
    position: relative;
    padding: 0 120px;
    overflow: hidden;
}
.sheet {
    height: 1400px;
    background: #fff;
    box-shadow: 0 0 14px rgba(0, 0, 0, 0.4);
}
.drawing {
    display: block;
    width: 100%;
}
.thin, .thick, .dims {
    fill: none;
    stroke: #000;
    stroke-width: 1.3;
}
.thick {
    stroke-width: 2.3;
}
.dims path {
    marker-end: url(#arrow);
}
.thin .hatched {
    fill: url(#hatch);
}
.letters {
    font: italic 17px "Liberation Serif", serif;
    stroke: #000;
    stroke-width: 0.3;
}
figcaption {
    display: flex;
    justify-content: center;
    gap: 18px;
    padding-right: 10px;
    font: bold 18px/24px "Liberation Serif", "Noto Sans CJK SC", serif;
    color: #111;
}
.convert {
    position: absolute;
    right: 3px;
    top: 9px;
    width: 88px;
    height: 31px;
    gap: 4px;
    border: 2px solid #fff;
    border-radius: 16px;
    background: #4189f0;
    color: #fff;
}
.h-scroll {
    height: 15px;
    display: flex;
    align-items: center;
    justify-content: space-between;
    padding: 0 8px 0 6px;
    background: #d0d0d0;
}
.h-thumb {
    width: 84%;
    height: 14px;
    border: 1px solid #8c8c8c;
    border-radius: 7px;
    background: #e8e8e8;
}
.v-scroll {
    width: 14px;
    display: flex;
    flex-direction: column;
    align-items: center;
    padding: 9px 0 8px;
    background: #d0d0d0;
}
.v-thumb {
    width: 13px;
    height: 32px;
    margin: auto 0 174px;
    border: 1px solid #8c8c8c;
    border-radius: 7px;
    background: #e8e8e8;
}

/* status bar */
.status-bar {
    height: 28px;
    display: flex;
    align-items: center;
    gap: 2px;
    padding: 0 232px 0 15px;
    color: #555;
}
.page-no {
    margin-right: auto;
}
.status-bar button {
    width: 24px;
    height: 24px;
    border-radius: 3px;
}
.status-bar .on {
    background: #bababa;
}
.status-split {
    width: 1px;
    height: 24px;
    margin: 0 8px;
    background: #d6d6d6;
}
.zoom-value {
    margin-left: 22px;
}
.ime-bar {
    position: absolute;
    right: 0;
    bottom: 0;
    height: 28px;
    display: flex;
    align-items: center;
    padding: 0 3px;
    border: 1px solid #8cb4ec;
    background: #fff;
}
.ime-bar button {
    width: 23px;
    height: 24px;
}
.ime-bar .ime-logo {
    width: 20px;
    height: 20px;
    margin: 0 2px 0 1px;
    border-radius: 50%;
    background: #2b78e4;
}
.ime-lang {
    color: #2b78e4;
    font-size: 15px;
    font-weight: bold;
}

/* taskbar */
.taskbar {
    height: 40px;
    display: flex;
    background: linear-gradient(90deg, #261816, #211610 35%, #1b180f 60%, #171510);
    color: #fff;
}
.system, .apps, .tray {
    display: flex;
}
.system button, .apps button {
    width: 48px;
}
.apps {
    gap: 1px;
    padding-left: 3px;
}
.apps .open {
    background: linear-gradient(#f8b1a2, #f8b1a2) center bottom / 40px 2px no-repeat;
}
.apps .wide {
    background: linear-gradient(#f8b1a2, #f8b1a2) center bottom / 48px 2px no-repeat #4e4541;
}
.player {
    width: 22px;
    height: 22px;
    display: flex;
    flex-direction: column;
    align-items: center;
    padding-top: 2px;
    border-radius: 2px;
    background: #f4ce14;
    color: #3b3000;
    font: bold 6px/8px "Liberation Sans", sans-serif;
}
.youdao {
    width: 24px;
    border-radius: 4px;
    background: #e5191c;
    font-size: 11px;
    font-weight: bold;
    line-height: 24px;
}
.tray {
    margin-left: auto;
}
.tray button {
    width: 24px;
}
.tray .people {
    margin-right: 12px;
}
.mail, .pinyin {
    width: 16px;
    height: 16px;
    display: flex;
    align-items: center;
    justify-content: center;
    border-radius: 2px;
    background: #ed1c1f;
}
.pinyin {
    background: #2c88ee;
}
.tray .lang {
    margin-right: 5px;
    font-size: 14px;
}
.tray .clock {
    width: 84px;
    flex-direction: column;
    line-height: 19px;
}
.tray .notice {
    position: relative;
    width: 44px;
    margin-right: 3px;
    border-right: 1px solid #5b5954;
}
.notice b {
    position: absolute;
    right: 12px;
    bottom: 5px;
    width: 16px;
    border: 1px solid #888;
    border-radius: 50%;
    background: #222;
    line-height: 14px;
}
```
